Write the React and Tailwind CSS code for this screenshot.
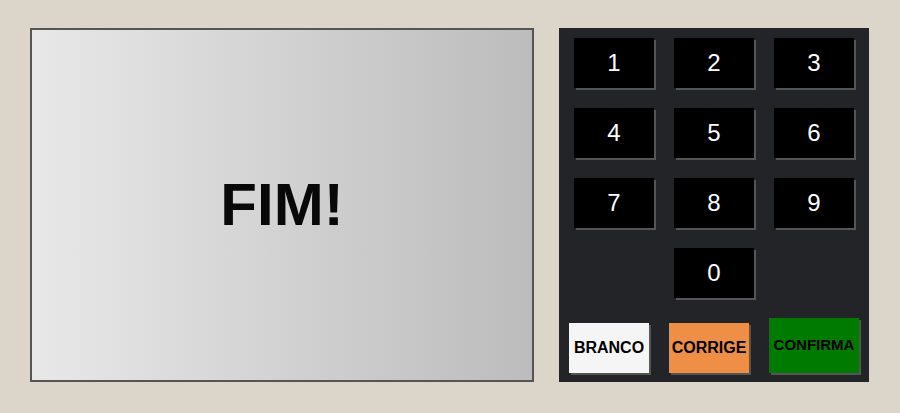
const keys = ['1', '2', '3', '4', '5', '6', '7', '8', '9']

function Key({ label }) {
  return (
    <button
      type="button"
      className="h-[50px] w-[80px] bg-black text-white text-[24px] shadow-[2px_2px_0_#555] flex items-center justify-center"
    >
      {label}
    </button>
  )
}

export default function App() {
  return (
    <div
      className="min-h-screen bg-[#dcd5ca] flex gap-[25px] pl-[30px] pt-[28px]"
      style={{ fontFamily: '"Liberation Sans", Arial, sans-serif' }}
    >
      <div className="w-[504px] h-[354px] border-2 border-[#555] bg-gradient-to-r from-[#e8e8e8] to-[#bcbcbc] flex items-center justify-center">
        <span className="text-[60px] font-bold text-[#080808] leading-none">FIM!</span>
      </div>

      <div className="w-[310px] h-[354px] bg-[#232428] flex flex-col items-center pt-[10px]">
        <div className="grid grid-cols-3 gap-[20px]">
          {keys.map((k) => (
            <Key key={k} label={k} />
          ))}
          <div />
          <Key label="0" />
          <div />
        </div>

        <div className="flex items-end gap-[20px] mt-[20px]">
          <button
            type="button"
            className="h-[50px] w-[80px] bg-[#f5f5f5] text-black text-[16px] font-bold shadow-[2px_2px_0_#555] flex items-center justify-center"
          >
            BRANCO
          </button>
          <button
            type="button"
            className="h-[50px] w-[80px] bg-[#ef8f45] text-black text-[16px] font-bold shadow-[2px_2px_0_#555] flex items-center justify-center"
          >
            CORRIGE
          </button>
          <button
            type="button"
            className="h-[55px] w-[90px] bg-[#007a00] text-black text-[15px] font-bold shadow-[2px_2px_0_#555] flex items-center justify-center"
          >
            CONFIRMA
          </button>
        </div>
      </div>
    </div>
  )
}
